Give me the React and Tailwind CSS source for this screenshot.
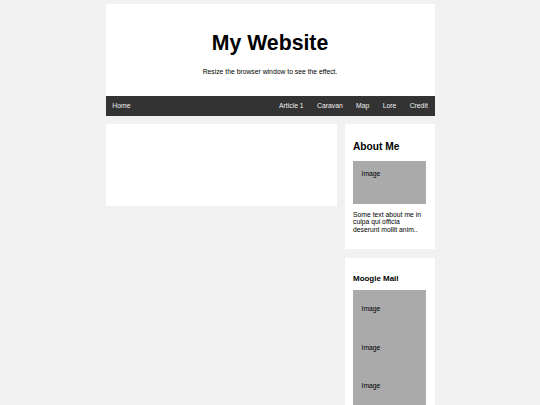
export default function App() {
  const links = ['Article 1', 'Caravan', 'Map', 'Lore', 'Credit'];

  return (
    <div
      className="min-h-[405px] bg-[#f1f1f1] pt-[4.25px] text-black"
      style={{ fontFamily: '"Liberation Sans", Arial, sans-serif' }}
    >
      <div className="mx-auto w-[329px]">
        {/* Header */}
        <div className="bg-white pt-[27px] pb-[20px] text-center">
          <h1 className="text-[21.25px] font-bold leading-[24px]">My Website</h1>
          <p className="mt-[13px] text-[6.8px] leading-[8px]">Resize the browser window to see the effect.</p>
        </div>

        {/* Top nav */}
        <div className="flex justify-between bg-[#333] text-[6.8px] leading-[7.8px] text-[#f2f2f2]">
          <a className="px-[6.8px] py-[6px]">Home</a>
          <div className="flex">
            {links.map((l) => (
              <a key={l} className="px-[6.7px] py-[6px]">
                {l}
              </a>
            ))}
          </div>
        </div>

        <div className="flex items-start gap-[8px]">
          {/* Left column */}
          <div className="w-[231px]">
            <div className="mt-[8px] h-[82px] bg-white" />
          </div>

          {/* Right column */}
          <div className="w-[90px]">
            <div className="mt-[8px] bg-white p-[8.5px]">
              <h2 className="my-[8.5px] text-[10.2px] font-bold leading-[11.7px]">About Me</h2>
              <div className="h-[42.5px] bg-[#aaa] p-[8.5px] text-[6.8px] leading-[7.8px]">Image</div>
              <p className="my-[6.8px] text-[6.8px] leading-[7.8px]">
                Some text about me in culpa qui officia deserunt mollit anim..
              </p>
            </div>

            <div className="mt-[8.5px] bg-white p-[8.5px]">
              <h3 className="mt-[7.5px] mb-[7px] text-[7.96px] font-bold leading-[9.15px]">Moogle Mail</h3>
              {[0, 1, 2].map((i) => (
                <div key={i} className="bg-[#aaa] px-[8.5px] py-[15.3px] text-[6.8px] leading-[7.8px]">
                  Image
                </div>
              ))}
            </div>
          </div>
        </div>
      </div>
    </div>
  );
}
